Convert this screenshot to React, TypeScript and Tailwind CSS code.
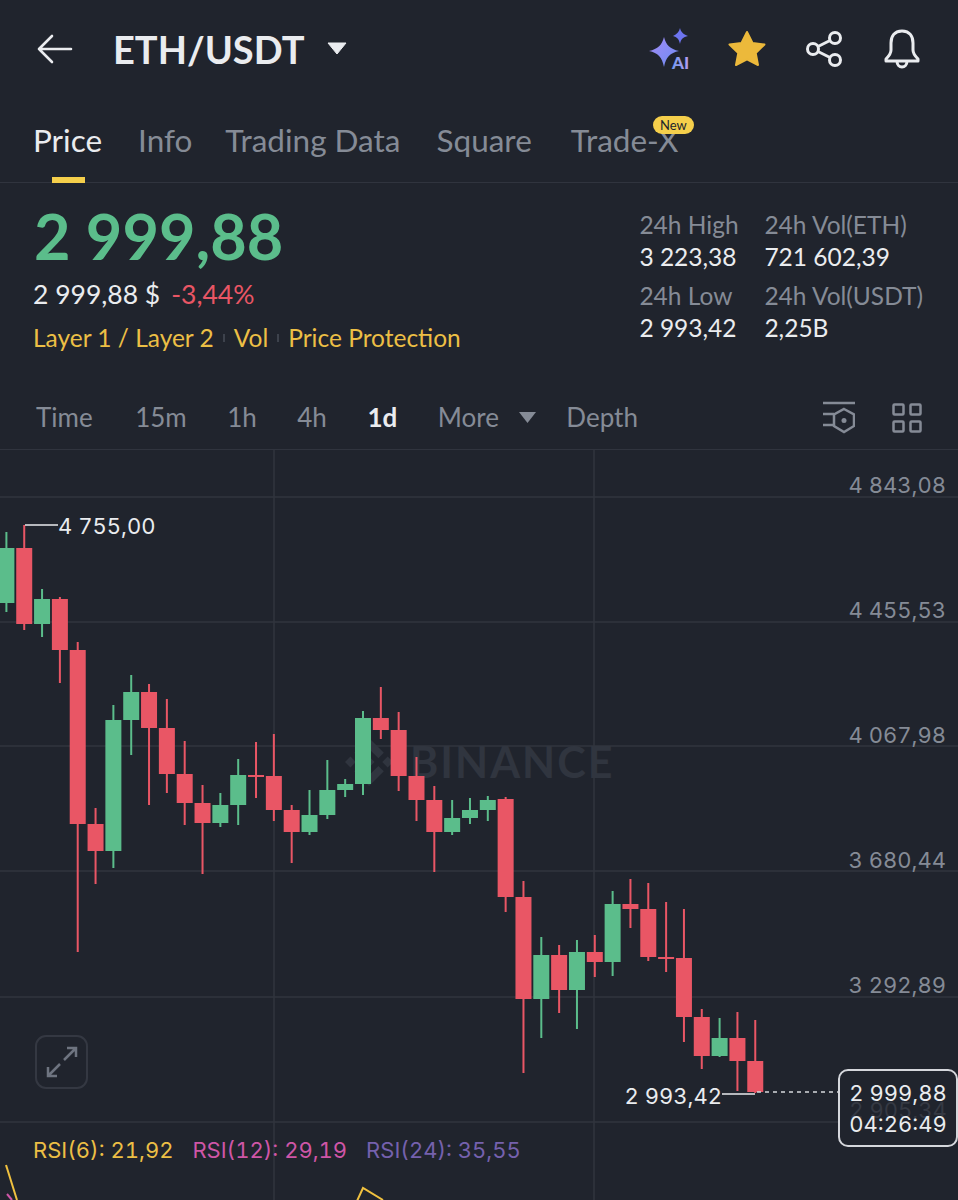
// [top wick, body top, body bottom, bottom wick]
const candles: { up: boolean; y: number[] }[] = [
  { up: true, y: [532, 548, 603, 612] },
  { up: false, y: [525, 548, 624, 630] },
  { up: true, y: [589, 599, 624, 637] },
  { up: false, y: [597, 599, 650, 683] },
  { up: false, y: [642, 650, 824, 952] },
  { up: false, y: [808, 824, 851, 884] },
  { up: true, y: [705, 720, 851, 868] },
  { up: true, y: [675, 692, 720, 755] },
  { up: false, y: [684, 692, 728, 805] },
  { up: false, y: [699, 728, 774, 793] },
  { up: false, y: [741, 774, 803, 825] },
  { up: false, y: [785, 803, 823, 874] },
  { up: true, y: [793, 805, 823, 827] },
  { up: true, y: [759, 775, 805, 825] },
  { up: false, y: [742, 775, 777, 798] },
  { up: false, y: [734, 776, 810, 821] },
  { up: false, y: [805, 810, 832, 863] },
  { up: true, y: [790, 815, 832, 835] },
  { up: true, y: [760, 790, 815, 819] },
  { up: true, y: [779, 784, 790, 797] },
  { up: true, y: [711, 718, 784, 795] },
  { up: false, y: [687, 718, 730, 739] },
  { up: false, y: [712, 730, 776, 791] },
  { up: false, y: [757, 776, 800, 821] },
  { up: false, y: [786, 800, 832, 872] },
  { up: true, y: [800, 818, 832, 835] },
  { up: true, y: [798, 810, 818, 824] },
  { up: true, y: [796, 800, 810, 821] },
  { up: false, y: [797, 799, 897, 912] },
  { up: false, y: [881, 897, 999, 1073] },
  { up: true, y: [937, 955, 999, 1038] },
  { up: false, y: [945, 955, 990, 1013] },
  { up: true, y: [940, 952, 990, 1029] },
  { up: false, y: [935, 952, 962, 977] },
  { up: true, y: [891, 904, 962, 976] },
  { up: false, y: [879, 904, 909, 928] },
  { up: false, y: [883, 909, 957, 961] },
  { up: false, y: [902, 957, 959, 972] },
  { up: false, y: [909, 958, 1017, 1042] },
  { up: false, y: [1009, 1017, 1056, 1069] },
  { up: true, y: [1018, 1038, 1056, 1057] },
  { up: false, y: [1012, 1038, 1061, 1091] },
  { up: false, y: [1020, 1061, 1092, 1093] },
]

const priceLabels = [
  { label: "4 843,08", cls: "top-[21px]" },
  { label: "4 455,53", cls: "top-[146px]" },
  { label: "4 067,98", cls: "top-[271px]" },
  { label: "3 680,44", cls: "top-[396px]" },
  { label: "3 292,89", cls: "top-[521px]" },
]

const tabs = [
  { label: "Info", cls: "" },
  { label: "Trading Data", cls: "-ml-[3px]" },
  { label: "Square", cls: "" },
]
const intervals = [
  { label: "Time", cls: "" },
  { label: "15m", cls: "ml-[2px]" },
  { label: "1h", cls: "" },
  { label: "4h", cls: "" },
]

function Chart() {
  return (
    <svg viewBox="0 450 958 750" className="absolute inset-0 h-full w-full">
      <g stroke="#30343e" strokeWidth="1.5">
        {[497, 622, 746, 871, 997, 1122].map((y) => (
          <line key={y} x1="0" x2="958" y1={y} y2={y} />
        ))}
        <line x1="274" x2="274" y1="450" y2="1200" />
        <line x1="594" x2="594" y1="450" y2="1200" />
      </g>
      {/* watermark */}
      <g transform="translate(345 738) scale(0.38)" fill="#30353f">
        <polygon points="38.73 53.2 63.3 28.64 87.89 53.22 102.19 38.92 63.3 0 24.42 38.9 38.73 53.2" />
        <polygon points="0 63.31 14.3 49 28.6 63.31 14.3 77.61 0 63.31" />
        <polygon points="38.73 73.41 63.3 97.97 87.88 73.4 102.19 87.7 63.3 126.61 24.42 87.72 38.73 73.41" />
        <polygon points="97.99 63.31 112.3 49 126.61 63.31 112.3 77.61 97.99 63.31" />
        <polygon points="77.83 63.3 63.3 48.78 48.79 63.29 63.3 77.83 77.83 63.3" />
      </g>
      <text x="410" y="778" fontSize="43" fontWeight="700" letterSpacing="2" fill="#30353f" fontFamily="Lato, sans-serif">
        BINANCE
      </text>
      {candles.map((c, i) => {
        const cx = 6.4 + i * 17.83
        const color = c.up ? "#5bbd8b" : "#e95665"
        return (
          <g key={i} fill={color}>
            <rect x={cx - 1} y={c.y[0]} width="2" height={c.y[3] - c.y[0]} />
            <rect x={cx - 8} y={c.y[1]} width="16" height={c.y[2] - c.y[1]} />
          </g>
        )
      })}
      <polyline points="58,525 25,525" fill="none" stroke="#e8eaee" strokeWidth="1.5" />
      <line x1="722" x2="755" y1="1094" y2="1094" stroke="#e8eaee" strokeWidth="1.5" />
      <line x1="757" x2="838" y1="1092" y2="1092" stroke="#d5d7dc" strokeWidth="1.5" strokeDasharray="4 4" />
      {/* rsi lines, cut by the page edge */}
      <g fill="none" strokeWidth="2">
        <line x1="6" y1="1165" x2="17" y2="1200" stroke="#f0c13f" />
        <line x1="7" y1="1194" x2="12" y2="1200" stroke="#cf56a7" />
        <polyline points="357,1201 363,1188 383,1200" stroke="#f0c13f" />
      </g>
    </svg>
  )
}

export default function App() {
  return (
    <div className="h-[1200px] w-[958px] overflow-hidden bg-[#20242d] font-['Lato',sans-serif] text-[#eaecef]">
      <header className="flex h-[98px] items-center pl-[37px] pr-[37px]">
        <svg width="36" height="30" viewBox="0 0 36 30" fill="none" stroke="#eaecef" strokeWidth="2.6" strokeLinecap="round" strokeLinejoin="round">
          <path d="M34 15H2M15 2L2 15L15 28" />
        </svg>
        <h1 className="ml-[40px] text-[38px] font-bold leading-none">ETH/USDT</h1>
        <svg width="20" height="14" viewBox="0 0 20 14" className="mb-[2px] ml-[23px]">
          <path d="M1 2h18l-9 11z" fill="#eaecef" stroke="#eaecef" strokeLinejoin="round" />
        </svg>
        <div className="ml-auto flex items-center gap-[38px]">
          <svg width="50" height="50" viewBox="0 -3 50 50">
            <defs>
              <linearGradient id="ai" x1="0" y1="0" x2="1" y2="1">
                <stop offset="0" stopColor="#a58bf5" />
                <stop offset="1" stopColor="#6b8cf2" />
              </linearGradient>
              <linearGradient id="ai2" x1="0" y1="0" x2="1" y2="0">
                <stop offset="0" stopColor="#6f9cf0" />
                <stop offset="1" stopColor="#b79cf0" />
              </linearGradient>
            </defs>
            <path d="M16 10C18 18 22 22 31 24C22 26 18 30 16 40C14 30 10 26 1 24C10 22 14 18 16 10Z" fill="url(#ai)" />
            <path d="M32 1C33 5 35 7 40 9C35 10 33 12 32 17C31 12 29 10 25 9C29 7 31 5 32 1Z" fill="#6d74ee" />
            <text x="24" y="42" fontSize="17" fontWeight="900" fill="url(#ai2)" fontFamily="Lato, sans-serif">
              AI
            </text>
          </svg>
          <svg width="40" height="38" viewBox="0 0 40 38" className="-ml-[9px]">
            <path
              d="M20 2L25.5 13L37.5 14.5L28.7 23L31 35L20 29.3L9 35L11.3 23L2.5 14.5L14.5 13Z"
              fill="#ecb93b"
              stroke="#ecb93b"
              strokeWidth="2"
              strokeLinejoin="round"
            />
          </svg>
          <svg width="40" height="40" viewBox="0 0 40 40" fill="none" stroke="#eaecef" strokeWidth="3">
            <circle cx="30" cy="9" r="5.5" />
            <circle cx="30" cy="31" r="5.5" />
            <circle cx="8" cy="20" r="5.5" />
            <path d="M13 17.5L25 11.5M13 22.5L25 28.5" />
          </svg>
          <svg width="38" height="40" viewBox="0 0 38 40" fill="none" stroke="#eaecef" strokeWidth="3" strokeLinejoin="round">
            <path d="M19 2C11 2 8 8 8 14V21C8 25 6 27 3 30V32H35V30C32 27 30 25 30 21V14C30 8 27 2 19 2Z" />
            <path d="M14 32C14 36 16.5 38 19 38C21.5 38 24 36 24 32" />
          </svg>
        </div>
      </header>

      <nav className="flex h-[85px] items-start gap-[36px] border-b border-[#30343e] pl-[33px] pr-[34px] pt-[22px] text-[31.5px] leading-[40px] text-[#858b96]">
        <span className="relative h-[63px] text-[#eaecef]">
          Price
          <span className="absolute bottom-0 left-[19px] h-[6px] w-[33px] bg-[#f5cf4b]" />
        </span>
        {tabs.map((t) => (
          <span key={t.label} className={t.cls}>
            {t.label}
          </span>
        ))}
        <span className="relative ml-[3px]">
          Trade-X
          <span className="absolute -top-[4px] left-[82px] flex h-[18px] w-[41px] items-center justify-center rounded-full bg-[#f5cf4b] text-[13px] font-normal leading-none text-[#20242d]">
            New
          </span>
        </span>
      </nav>

      <section className="flex h-[183px] justify-between pl-[34px] pr-[35px] pt-[19px]">
        <div>
          <div className="text-[63px] font-bold leading-[68px] text-[#5bbd8b]">2 999,88</div>
          <div className="-ml-[1px] mt-[6px] flex gap-[11px] text-[26.5px] leading-[36px]">
            <span>2 999,88 $</span>
            <span className="text-[#e95665]">-3,44%</span>
          </div>
          <div className="-ml-[1px] mt-[8px] flex items-center gap-[9px] text-[24.5px] leading-[36px] text-[#ecbf45]">
            <span>Layer 1 / Layer 2</span>
            <span className="h-[8px] w-[2px] bg-[#3d424c]" />
            <span>Vol</span>
            <span className="h-[8px] w-[2px] bg-[#3d424c]" />
            <span>Price Protection</span>
          </div>
        </div>
        <div className="grid h-fit grid-cols-[125px_auto] gap-y-[8px] pt-[7px] text-[24.5px] leading-[31px]">
          <div>
            <div className="text-[#858b96]">24h High</div>
            <div className="mt-[1px]">3 223,38</div>
          </div>
          <div>
            <div className="text-[#858b96]">24h Vol(ETH)</div>
            <div className="mt-[1px]">721 602,39</div>
          </div>
          <div>
            <div className="text-[#858b96]">24h Low</div>
            <div className="mt-[1px]">2 993,42</div>
          </div>
          <div>
            <div className="text-[#858b96]">24h Vol(USDT)</div>
            <div className="mt-[1px]">2,25B</div>
          </div>
        </div>
      </section>

      <div className="flex h-[84px] items-center gap-[40.5px] border-b border-[#30343e] pl-[36px] pr-[36px] pt-[20px] text-[26px] text-[#858b96]">
        {intervals.map((t) => (
          <span key={t.label} className={t.cls}>
            {t.label}
          </span>
        ))}
        <span className="font-bold text-[#eaecef]">1d</span>
        <span className="flex items-center gap-[20px]">
          More
          <svg width="17" height="11" viewBox="0 0 17 11">
            <path d="M0 0h17l-8.5 11z" fill="#858b96" />
          </svg>
        </span>
        <span className="-ml-[10px]">Depth</span>
        <div className="ml-auto flex items-center gap-[37px]">
          <svg width="32" height="34" viewBox="0 0 32 34" fill="none" stroke="#858b96" strokeWidth="2.5">
            <path d="M0 2H32M0 13H11M0 24H11" />
            <path d="M21 8L31 13.5V25L21 31L11 25V13.5Z" />
            <circle cx="21" cy="19.5" r="2.5" fill="#858b96" stroke="none" />
          </svg>
          <svg width="30" height="30" viewBox="0 0 30 30" fill="none" stroke="#858b96" strokeWidth="2.5">
            <rect x="1.5" y="1.5" width="10" height="10" rx="1" />
            <rect x="18.5" y="1.5" width="10" height="10" rx="1" />
            <rect x="1.5" y="18.5" width="10" height="10" rx="1" />
            <rect x="18.5" y="18.5" width="10" height="10" rx="1" />
          </svg>
        </div>
      </div>

      <div className="relative h-[750px] font-['Inter',sans-serif] tabular-nums">
        <Chart />
        {priceLabels.map((p) => (
          <span key={p.label} className={`absolute right-[12px] text-[22px] leading-[28px] text-[#858b96] ${p.cls}`}>
            {p.label}
          </span>
        ))}
        <span className="absolute left-[58px] top-[62px] text-[22px] leading-[28px] text-[#eaecef]">4 755,00</span>
        <span className="absolute right-[236px] top-[632px] text-[22px] leading-[28px] text-[#eaecef]">2 993,42</span>

        <div className="absolute left-[35px] top-[585px] flex h-[54px] w-[53px] items-center justify-center rounded-[11px] border-2 border-[#343842]">
          <svg width="32" height="32" viewBox="0 0 32 32" fill="none" stroke="#6e7480" strokeWidth="2.5">
            <path d="M18 14L30 2M21 2H30V11M14 18L2 30M2 21V30H11" />
          </svg>
        </div>

        <div className="absolute left-[33px] top-[686px] flex gap-[19px] text-[22px] leading-[28px]">
          <span className="text-[#ecbf45]">RSI(6): 21,92</span>
          <span className="text-[#cf56a7]">RSI(12): 29,19</span>
          <span className="text-[#7561ad]">RSI(24): 35,55</span>
        </div>

        <div className="absolute left-[838px] top-[619px] flex h-[78px] w-[120px] flex-col items-center justify-center rounded-[10px] border-2 border-[#d5d7dc] bg-[#20242d] pt-[2px] text-[22px] leading-[31px] text-[#eaecef]">
          <span className="absolute top-[24px] text-[#353943]">2 905,34</span>
          <span className="relative">2 999,88</span>
          <span className="relative">04:26:49</span>
        </div>
      </div>
    </div>
  )
}
